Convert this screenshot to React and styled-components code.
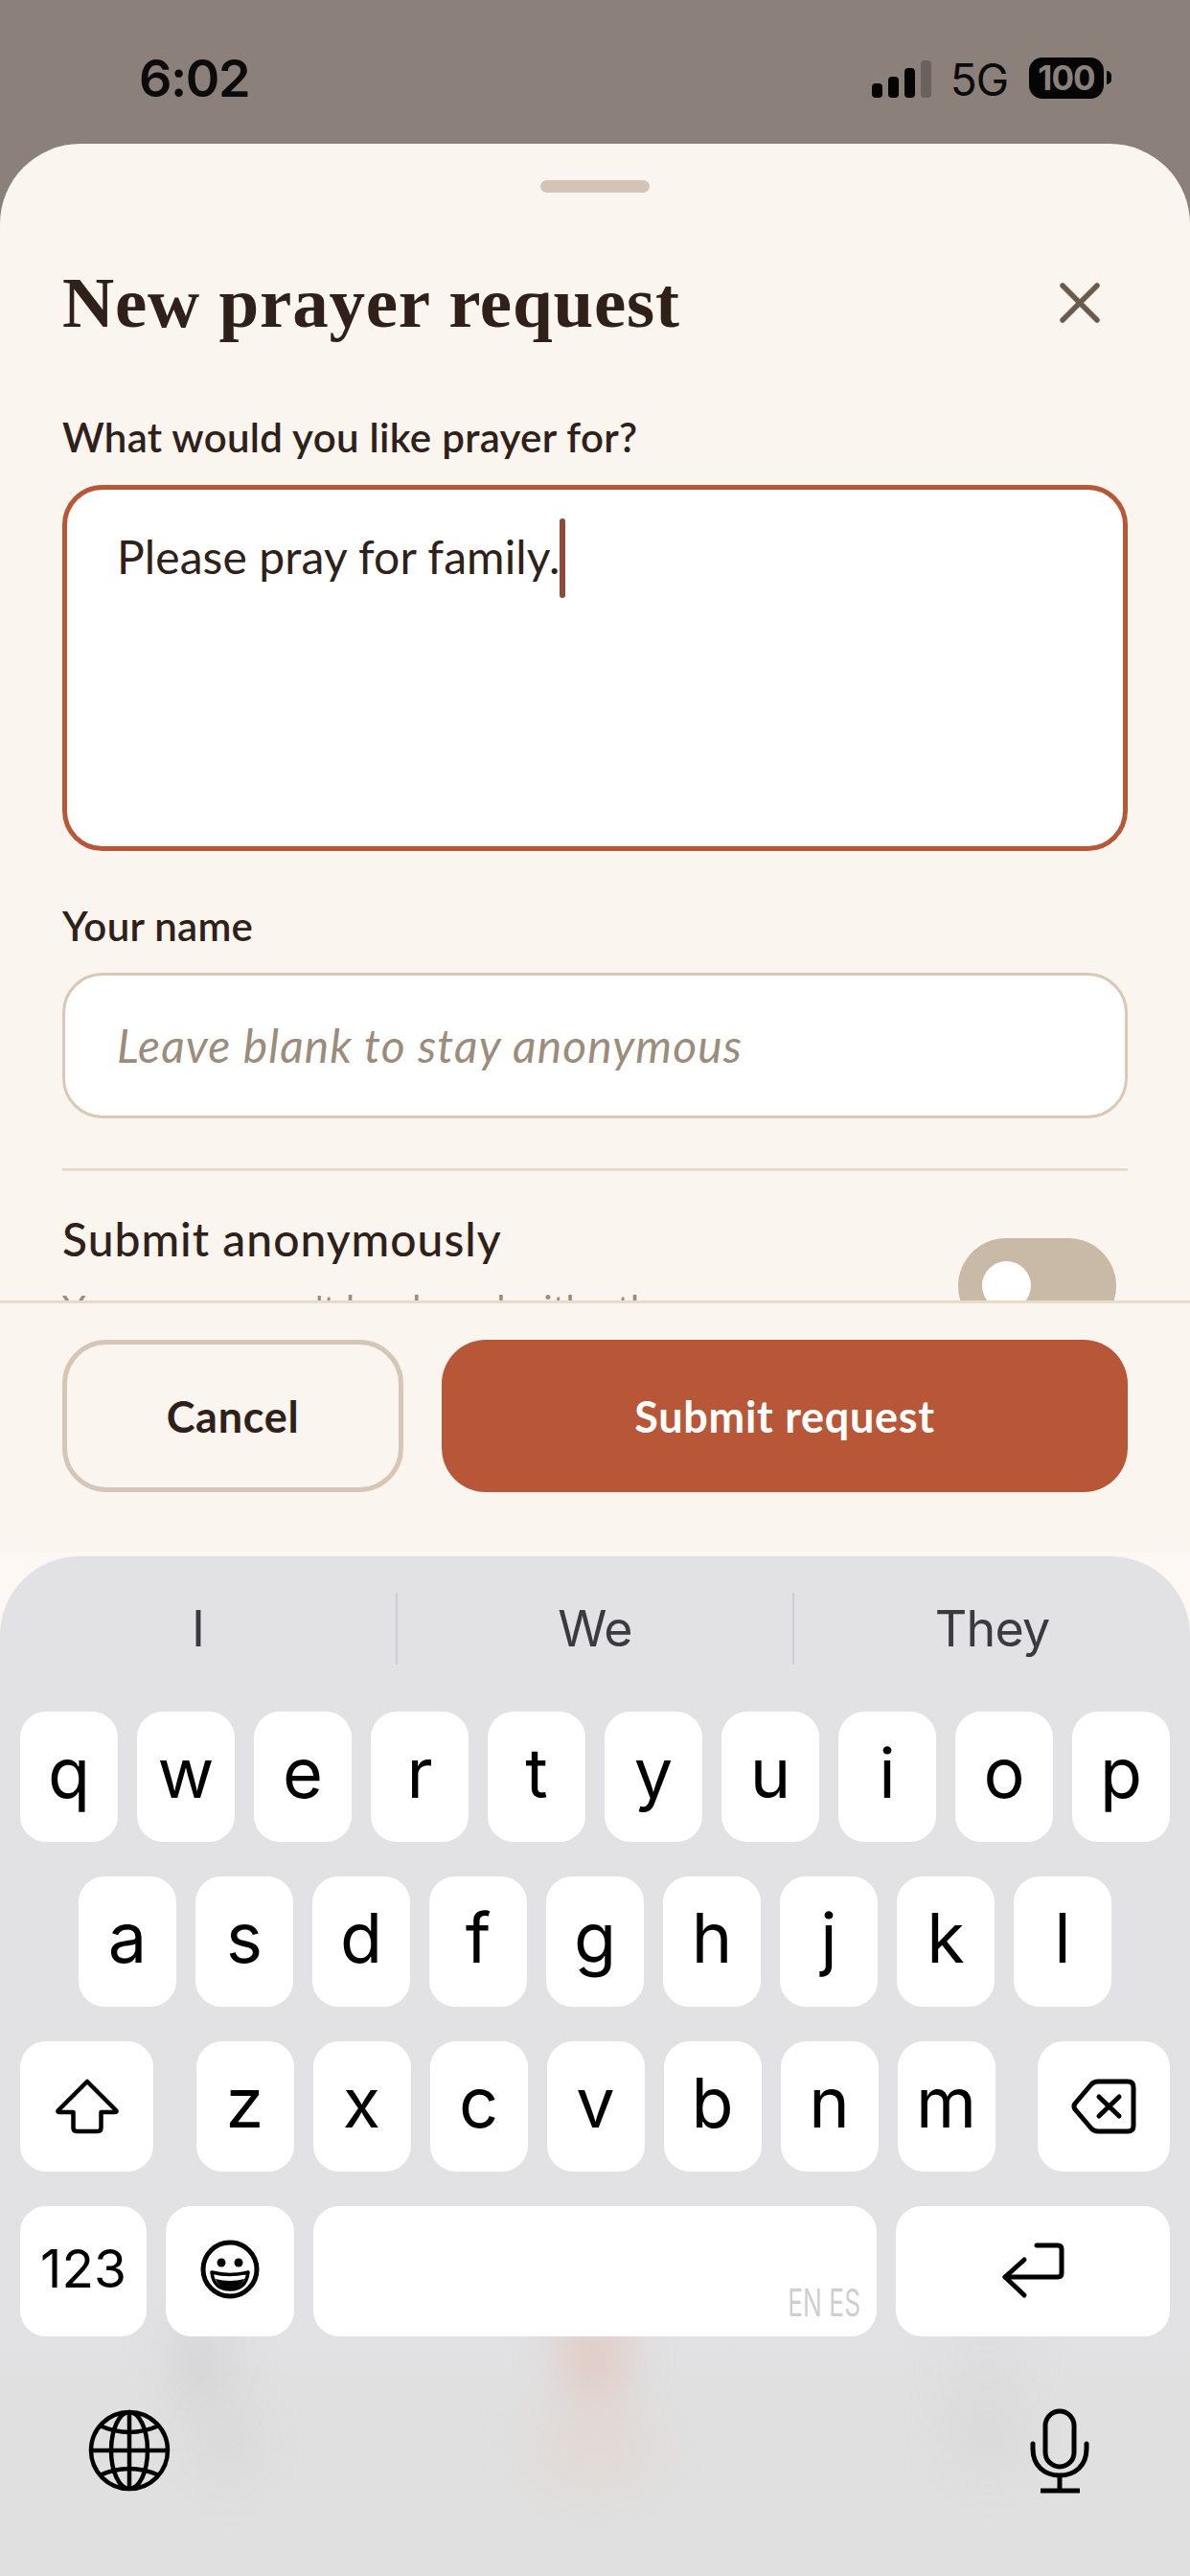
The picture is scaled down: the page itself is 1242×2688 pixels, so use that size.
import React from "react";
import styled, { createGlobalStyle } from "styled-components";

const GlobalStyle = createGlobalStyle`
  html, body {
    margin: 0;
    padding: 0;
    background: #8b807a;
  }
  * {
    box-sizing: border-box;
  }
`;

const UI_FONT = `Lato, "Open Sans", sans-serif`;
const KEY_FONT = `Inter, "Liberation Sans", sans-serif`;

const Screen = styled.div`
  width: 1242px;
  height: 2688px;
  display: flex;
  flex-direction: column;
  overflow: hidden;
  background: #8b807a;
`;

/* status bar */
const StatusBar = styled.div`
  height: 150px;
  flex: none;
  display: flex;
  justify-content: space-between;
  padding: 52px 90px 0 145px;
  color: #0b0b0b;
`;

const Time = styled.div`
  font: 600 54px/60px ${KEY_FONT};
  letter-spacing: -1.5px;
`;

const StatusRight = styled.div`
  display: flex;
  align-items: flex-start;
  padding-top: 8px;
`;

const Signal = styled.div`
  display: flex;
  align-items: flex-end;
  gap: 6px;
  height: 39px;
  margin-top: 3px;
`;

const SignalBar = styled.span`
  width: 11px;
  height: ${(p) => p.$h}px;
  border-radius: 4px;
  background: ${(p) => (p.$off ? "#6a625d" : "#050505")};
`;

const Network = styled.div`
  font: 400 46px/50px ${KEY_FONT};
  margin: -2px 22px 0 20px;
  letter-spacing: -1px;
`;

const Battery = styled.div`
  width: 78px;
  height: 43px;
  margin-top: 0;
  border-radius: 14px;
  background: #050505;
  color: #8b807a;
  font: 700 35px/43px ${KEY_FONT};
  letter-spacing: -1px;
  text-align: center;
  position: relative;

  &::after {
    content: "";
    position: absolute;
    right: -8px;
    top: 14px;
    width: 5px;
    height: 14px;
    border-radius: 0 7px 7px 0;
    background: #050505;
  }
`;

/* bottom sheet */
const Sheet = styled.div`
  height: 1470px;
  flex: none;
  display: flex;
  flex-direction: column;
  background: #faf5ef;
  border-radius: 84px 84px 0 0;
`;

const Handle = styled.div`
  width: 114px;
  height: 13px;
  margin: 38px auto 0;
  border-radius: 7px;
  background: #d4c4b5;
`;

const FormArea = styled.div`
  flex: 1;
  min-height: 0;
  overflow: hidden;
  padding: 0 65px;
`;

const Header = styled.div`
  display: flex;
  justify-content: space-between;
  align-items: center;
  height: 96px;
  margin-top: 67px;
  margin-bottom: 66px;
`;

const Title = styled.h1`
  margin: 0;
  font: 700 75px/96px "Liberation Serif", serif;
  color: #2f2119;
  letter-spacing: 0.8px;
`;

const CloseButton = styled.div`
  display: flex;
  margin-right: 28px;
  color: #6b5a4e;
`;

const FieldLabel = styled.div`
  font: 600 42px/52px ${UI_FONT};
  color: #2f2119;
  letter-spacing: 0.3px;
  margin-bottom: ${(p) => p.$gap || 24}px;
`;

const TextBox = styled.div`
  height: 382px;
  display: flex;
  align-items: flex-start;
  padding: 30px 52px;
  background: #fff;
  border: 5px solid #b85738;
  border-radius: 42px;
  margin-bottom: 52px;
`;

const TypedText = styled.div`
  font: 400 48px/66px ${UI_FONT};
  color: #2f2119;
  letter-spacing: 0.1px;
  margin-top: 7px;
`;

const Caret = styled.span`
  flex: none;
  width: 6px;
  height: 83px;
  margin-top: 0;
  border-radius: 3px;
  background: #8f4a3c;
`;

const NameBox = styled.div`
  height: 152px;
  display: flex;
  align-items: center;
  padding: 0 54px;
  background: #fff;
  border: 3px solid #d9c8b6;
  border-radius: 42px;
`;

const Placeholder = styled.span`
  font: italic 400 48px/60px ${UI_FONT};
  color: #9c8c7c;
  letter-spacing: 1.1px;
`;

const Rule = styled.div`
  height: 3px;
  background: #e8dcc8;
  margin-top: 52px;
`;

const ToggleRow = styled.div`
  display: flex;
  justify-content: space-between;
  align-items: flex-start;
  padding: 34px 12px 0 0;
`;

const ToggleText = styled.div`
  display: flex;
  flex-direction: column;
`;

const ToggleTitle = styled.div`
  font: 500 48px/64px ${UI_FONT};
  color: #2f2119;
  letter-spacing: 1px;
  margin-top: 5px;
`;

const ToggleHint = styled.div`
  font: 400 39px/50px ${UI_FONT};
  color: #9c8c7c;
  margin-top: 15px;
`;

const Toggle = styled.div`
  width: 165px;
  height: 100px;
  margin-top: 36px;
  padding: 24px 25px;
  border-radius: 50px;
  background: #c9baa8;
`;

const ToggleThumb = styled.div`
  width: 51px;
  height: 51px;
  border-radius: 50%;
  background: #fff;
`;

const Footer = styled.div`
  flex: none;
  height: 263px;
  display: flex;
  gap: 40px;
  padding: 38px 65px 0;
  border-top: 3px solid #e8dcc8;
`;

const ActionButton = styled.div`
  height: 159px;
  display: flex;
  align-items: center;
  justify-content: center;
  border-radius: 46px;
  font: 700 45px/50px ${UI_FONT};
  letter-spacing: 0.7px;
  width: ${(p) => (p.$primary ? "716px" : "356px")};
  color: ${(p) => (p.$primary ? "#fff" : "#2f2119")};
  background: ${(p) => (p.$primary ? "#b85738" : "transparent")};
  border: ${(p) => (p.$primary ? "none" : "5px solid #d6c6b6")};
`;

/* system keyboard */
const KeyboardWell = styled.div`
  flex: 1;
  min-height: 0;
  padding-top: 2px;
  background: #fdf8f4;
`;

const Keyboard = styled.div`
  position: relative;
  height: 100%;
  overflow: hidden;
  border-top: 2px solid #f6f6f6;
  border-radius: 84px 84px 0 0;
  background: linear-gradient(#e2e1e4 0, #e2e1e4 780px, #e0e0e0 900px);
`;

const Blob = styled.span`
  position: absolute;
  left: ${(p) => p.$x - p.$w / 2}px;
  top: ${(p) => p.$y - 1625 - p.$h / 2}px;
  width: ${(p) => p.$w}px;
  height: ${(p) => p.$h}px;
  border-radius: 50%;
  background: ${(p) => p.$c};
  filter: blur(24px);
`;

const Suggestions = styled.div`
  position: relative;
  display: grid;
  grid-template-columns: 413px 414px 415px;
  height: 75px;
  margin-top: 38px;
`;

const Suggestion = styled.div`
  display: flex;
  align-items: center;
  justify-content: center;
  font: 400 52px/75px ${KEY_FONT};
  color: #3b3a3f;
  letter-spacing: -0.8px;
  border-left: ${(p) => (p.$first ? "none" : "2px solid #cdccd0")};
`;

const Keys = styled.div`
  position: relative;
  display: flex;
  flex-direction: column;
  gap: 36px;
  margin-top: 49px;
  padding: 0 21px;
`;

const KeyRow = styled.div`
  display: flex;
  justify-content: ${(p) => p.$justify || "space-between"};
  gap: 20px;
`;

const KeyGroup = styled.div`
  display: flex;
  gap: 20px;
`;

const Key = styled.div`
  position: relative;
  flex: none;
  width: ${(p) => p.$w || 102}px;
  height: 136px;
  display: flex;
  align-items: center;
  justify-content: center;
  border-radius: 27px;
  background: #fff;
  color: #000;
  font: 400 ${(p) => p.$size || 72}px/1 ${KEY_FONT};
  padding-bottom: ${(p) => p.$lift ?? 8}px;
`;

const SpaceHint = styled.span`
  position: absolute;
  right: 17px;
  bottom: 15px;
  font: 400 40px/40px ${KEY_FONT};
  color: #cfcfcf;
  transform: scaleX(0.66);
  transform-origin: right center;
  white-space: nowrap;
`;

const SystemRow = styled.div`
  position: relative;
  display: flex;
  justify-content: space-between;
  align-items: flex-start;
  margin-top: 75px;
  padding: 0 105px 0 91px;
`;

const ShiftIcon = () => (
  <svg width="70" height="62" viewBox="0 0 70 62" fill="none" stroke="#000" strokeWidth="4.5" strokeLinejoin="round">
    <path d="M35 5 L4.5 35.5 Q4 37 6 37 H20.5 V53 Q20.5 57 24 57 H46 Q49.5 57 49.5 53 V37 H64 Q66 37 65.5 35.5 Z" />
  </svg>
);

const DeleteIcon = () => (
  <svg width="70" height="60" viewBox="0 0 70 60" fill="none" stroke="#000" strokeWidth="5" strokeLinecap="round" strokeLinejoin="round">
    <path d="M5 27 L22 7 Q25 4 29 4 H60 Q66 4 66 10 V50 Q66 56 60 56 H29 Q25 56 22 53 L5 33 Q3 30 5 27 Z" />
    <path d="M30 20 L51 40 M51 20 L30 40" />
  </svg>
);

const ReturnIcon = () => (
  <svg width="68" height="60" viewBox="0 0 68 60" fill="none" stroke="#000" strokeWidth="5" strokeLinecap="round" strokeLinejoin="round">
    <path d="M38 4 H60 Q64 4 64 8 V33 Q64 37 60 37 H5" />
    <path d="M25 19 L5 37 L25 56" />
  </svg>
);

const EmojiIcon = () => (
  <svg width="66" height="66" viewBox="0 0 66 66" fill="none">
    <circle cx="33" cy="33" r="28" stroke="#000" strokeWidth="5" />
    <circle cx="24" cy="26" r="4.5" fill="#000" />
    <circle cx="42" cy="26" r="4.5" fill="#000" />
    <path d="M14 36 Q33 41 52 36 Q50 54 33 54 Q16 54 14 36 Z" stroke="#000" strokeWidth="3.5" strokeLinejoin="round" />
    <path d="M18 43 Q33 47 48 43 Q45 53 33 53 Q21 53 18 43 Z" fill="#000" />
  </svg>
);

const GlobeIcon = () => (
  <svg width="88" height="88" viewBox="-44 -44 88 88" fill="none" stroke="#000" strokeWidth="4.5">
    <circle r="40" />
    <ellipse rx="19" ry="40" />
    <path d="M0 -40 V40 M-40 0 H40" />
    <path d="M-31 -26 Q0 -12 31 -26 M-31 26 Q0 12 31 26" />
  </svg>
);

const MicIcon = () => (
  <svg width="62" height="90" viewBox="0 0 62 90" fill="none" stroke="#000" strokeWidth="5" strokeLinecap="round">
    <rect x="16" y="3" width="30" height="58" rx="15" />
    <path d="M3 37 V42 C3 60 15 70 31 70 C47 70 59 60 59 42 V37" />
    <path d="M31 70 V86 M11 86 H52" strokeLinecap="butt" />
  </svg>
);

const CloseIcon = () => (
  <svg width="44" height="44" viewBox="0 0 44 44" fill="none" stroke="currentColor" strokeWidth="5.5" strokeLinecap="round">
    <path d="M4 4 L40 40 M40 4 L4 40" />
  </svg>
);

const SIGNAL_BARS = [15, 22, 31];
const TOP_ROW = ["q", "w", "e", "r", "t", "y", "u", "i", "o", "p"];
const HOME_ROW = ["a", "s", "d", "f", "g", "h", "j", "k", "l"];
const BOTTOM_ROW = ["z", "x", "c", "v", "b", "n", "m"];

// soft shapes of the tab bar showing through the keyboard
const BLOBS = [
  { x: 208, y: 2465, w: 60, h: 100, c: "rgba(190,190,190,.32)" },
  { x: 240, y: 2550, w: 70, h: 90, c: "rgba(205,205,205,.3)" },
  { x: 620, y: 2460, w: 70, h: 100, c: "rgba(226,168,148,.38)" },
  { x: 620, y: 2555, w: 140, h: 90, c: "rgba(230,208,198,.38)" },
  { x: 1030, y: 2470, w: 70, h: 90, c: "rgba(212,212,212,.28)" },
  { x: 1030, y: 2545, w: 80, h: 80, c: "rgba(208,208,208,.35)" },
];

export default function App() {
  return (
    <Screen>
      <GlobalStyle />
      <StatusBar>
        <Time>6:02</Time>
        <StatusRight>
          <Signal>
            {SIGNAL_BARS.map((h) => (
              <SignalBar key={h} $h={h} />
            ))}
            <SignalBar $h={39} $off />
          </Signal>
          <Network>5G</Network>
          <Battery>100</Battery>
        </StatusRight>
      </StatusBar>

      <Sheet>
        <Handle />
        <FormArea>
          <Header>
            <Title>New prayer request</Title>
            <CloseButton>
              <CloseIcon />
            </CloseButton>
          </Header>
          <FieldLabel>What would you like prayer for?</FieldLabel>
          <TextBox>
            <TypedText>Please pray for family.</TypedText>
            <Caret />
          </TextBox>
          <FieldLabel $gap={23}>Your name</FieldLabel>
          <NameBox>
            <Placeholder>Leave blank to stay anonymous</Placeholder>
          </NameBox>
          <Rule />
          <ToggleRow>
            <ToggleText>
              <ToggleTitle>Submit anonymously</ToggleTitle>
              <ToggleHint>Your name won't be shared with others</ToggleHint>
            </ToggleText>
            <Toggle>
              <ToggleThumb />
            </Toggle>
          </ToggleRow>
        </FormArea>
        <Footer>
          <ActionButton>Cancel</ActionButton>
          <ActionButton $primary>Submit request</ActionButton>
        </Footer>
      </Sheet>

      <KeyboardWell>
        <Keyboard>
          {BLOBS.map((b) => (
            <Blob key={`${b.x}-${b.y}`} $x={b.x} $y={b.y} $w={b.w} $h={b.h} $c={b.c} />
          ))}
          <Suggestions>
            <Suggestion $first>I</Suggestion>
            <Suggestion>We</Suggestion>
            <Suggestion>They</Suggestion>
          </Suggestions>
          <Keys>
            <KeyRow>
              {TOP_ROW.map((k) => (
                <Key key={k}>{k}</Key>
              ))}
            </KeyRow>
            <KeyRow $justify="center">
              {HOME_ROW.map((k) => (
                <Key key={k}>{k}</Key>
              ))}
            </KeyRow>
            <KeyRow>
              <Key $w={139} $lift={0}>
                <ShiftIcon />
              </Key>
              <KeyGroup>
                {BOTTOM_ROW.map((k) => (
                  <Key key={k}>{k}</Key>
                ))}
              </KeyGroup>
              <Key $w={138} $lift={0}>
                <DeleteIcon />
              </Key>
            </KeyRow>
            <KeyRow>
              <Key $w={132} $size={55} $lift={6}>
                123
              </Key>
              <Key $w={134} $lift={4}>
                <EmojiIcon />
              </Key>
              <Key $w={588}>
                <SpaceHint>EN ES</SpaceHint>
              </Key>
              <Key $w={286} $lift={2}>
                <ReturnIcon />
              </Key>
            </KeyRow>
          </Keys>
          <SystemRow>
            <GlobeIcon />
            <MicIcon />
          </SystemRow>
        </Keyboard>
      </KeyboardWell>
    </Screen>
  );
}
